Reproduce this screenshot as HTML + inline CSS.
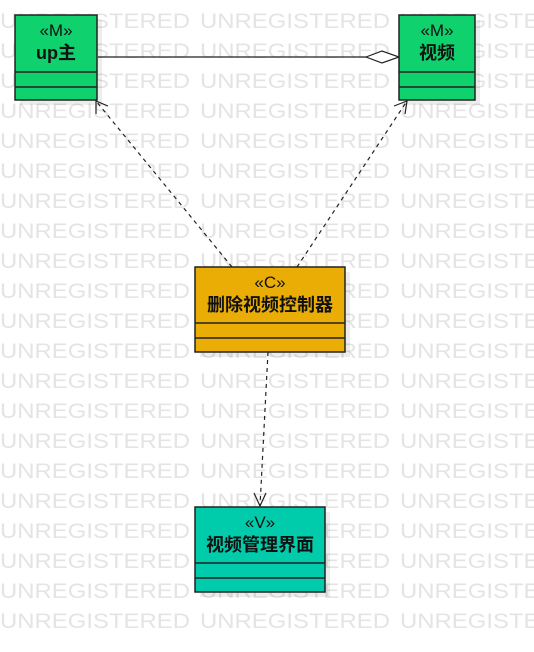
<!DOCTYPE html>
<html><head><meta charset="utf-8"><style>
html,body{margin:0;padding:0;background:#fff;width:534px;height:652px;overflow:hidden}
svg{display:block}
.wm{font-family:"Liberation Sans",sans-serif;font-size:21px;fill:#e4e4e4}
.st{font-family:"Liberation Sans","Noto Sans CJK SC",sans-serif;font-size:17px;fill:#111;text-anchor:middle}
.nm{font-family:"Liberation Sans","Noto Sans CJK SC",sans-serif;font-size:18px;font-weight:bold;fill:#111;text-anchor:middle}
</style></head><body>
<svg width="534" height="652" xmlns="http://www.w3.org/2000/svg">
<defs><g id="r" class="wm">
<text x="0" y="0" textLength="190" lengthAdjust="spacingAndGlyphs">UNREGISTERED</text>
<text x="200" y="0" textLength="190" lengthAdjust="spacingAndGlyphs">UNREGISTERED</text>
<text x="400" y="0" textLength="190" lengthAdjust="spacingAndGlyphs">UNREGISTERED</text>
</g></defs>
<use href="#r" y="28"/><use href="#r" y="58"/><use href="#r" y="88"/><use href="#r" y="118"/>
<use href="#r" y="148"/><use href="#r" y="178"/><use href="#r" y="208"/><use href="#r" y="238"/>
<use href="#r" y="268"/><use href="#r" y="298"/><use href="#r" y="328"/><use href="#r" y="358"/>
<use href="#r" y="388"/><use href="#r" y="418"/><use href="#r" y="448"/><use href="#r" y="478"/>
<use href="#r" y="508"/><use href="#r" y="538"/><use href="#r" y="568"/><use href="#r" y="598"/>
<use href="#r" y="628"/>
<g fill="#000" opacity="0.07">
<rect x="20" y="20" width="82" height="85"/>
<rect x="404" y="20" width="76" height="85"/>
<rect x="200" y="272" width="150" height="85"/>
<rect x="200" y="512" width="130" height="85"/>
</g>
<g stroke="#222" fill="none" stroke-width="1.2">
<line x1="98" y1="57" x2="366" y2="57"/>
<path d="M366 57 L382 51 L399 57 L382 63 Z" fill="#fff"/>
<g stroke-dasharray="4,4">
<line x1="232" y1="267" x2="96" y2="101"/>
<line x1="297" y1="267" x2="407" y2="101"/>
<line x1="268" y1="352" x2="260" y2="506"/>
</g>
<path d="M96 114 L96 101 L108 106"/>
<path d="M394 106 L407 101 L405 114"/>
<path d="M254 493 L260 506 L266 493"/>
</g>
<g stroke="#222" stroke-width="1.5">
<rect x="15" y="15" width="82" height="85" fill="#0fd16d"/>
<line x1="15" y1="72" x2="97" y2="72"/><line x1="15" y1="87" x2="97" y2="87"/>
<rect x="399" y="15" width="76" height="85" fill="#0fd16d"/>
<line x1="399" y1="72" x2="475" y2="72"/><line x1="399" y1="87" x2="475" y2="87"/>
<rect x="195" y="267" width="150" height="85" fill="#e9ad06"/>
<line x1="195" y1="323" x2="345" y2="323"/><line x1="195" y1="338" x2="345" y2="338"/>
<rect x="195" y="507" width="130" height="85" fill="#00cbaa"/>
<line x1="195" y1="563" x2="325" y2="563"/><line x1="195" y1="578" x2="325" y2="578"/>
</g>
<text class="st" x="56" y="36">«M»</text>
<text class="nm" x="56" y="59">up主</text>
<text class="st" x="437" y="36">«M»</text>
<text class="nm" x="437" y="59">视频</text>
<text class="st" x="270" y="288">«C»</text>
<text class="nm" x="270" y="311">删除视频控制器</text>
<text class="st" x="260" y="528">«V»</text>
<text class="nm" x="260" y="551">视频管理界面</text>
</svg>
</body></html>
